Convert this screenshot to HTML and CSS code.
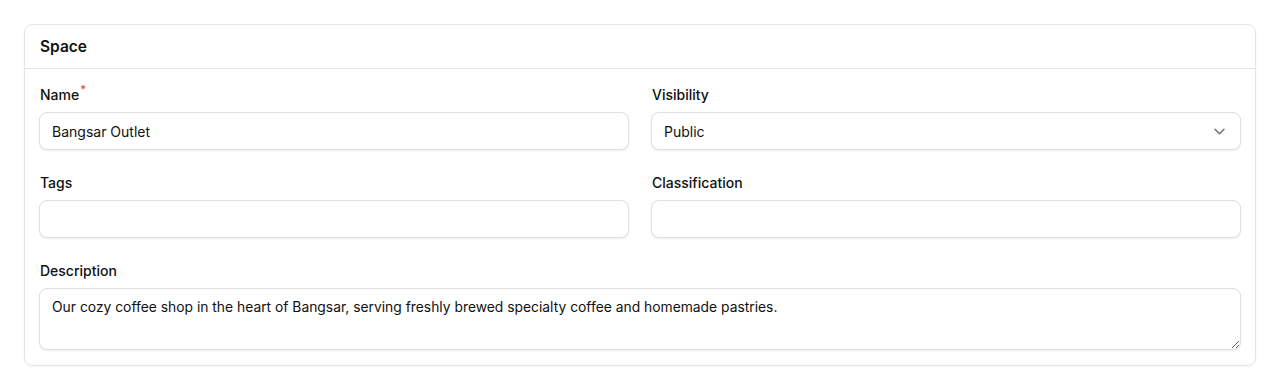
FILE: index.html
```html
<!DOCTYPE html>
<html lang="en">
<head>
    <meta charset="UTF-8">
    <title>Space</title>
    <link rel="stylesheet" href="styles.css">
</head>
<body>
<div class="page">
    <div class="card">
        <div class="cardHeader">Space</div>
        <div class="cardBody">
            <div class="field">
                <label class="label">Name<span class="req">*</span></label>
                <input class="input" type="text" value="Bangsar Outlet">
            </div>
            <div class="field">
                <label class="label">Visibility</label>
                <div class="select">
                    <span>Public</span>
                    <svg width="11" height="7" viewBox="0 0 11 7" fill="none" stroke="#6b7280" stroke-width="1.5" stroke-linecap="round" stroke-linejoin="round"><path d="M1 1.2l4.5 4.5 4.5-4.5"/></svg>
                </div>
            </div>
            <div class="field">
                <label class="label">Tags</label>
                <input class="input" type="text" value="">
            </div>
            <div class="field">
                <label class="label">Classification</label>
                <input class="input" type="text" value="">
            </div>
            <div class="field wide">
                <label class="label">Description</label>
                <textarea class="textarea">Our cozy coffee shop in the heart of Bangsar, serving freshly brewed specialty coffee and homemade pastries.</textarea>
            </div>
        </div>
    </div>
</div>
</body>
</html>
```

FILE: styles.css
```css
*{
    margin: 0px;
    padding: 0px;
    box-sizing: border-box;
}
body{
    background-color: #ffffff;
    font-family: Inter, "Noto Sans", sans-serif;
    color: #111111;
}
.page{
    padding: 24px;
}
.card{
    border: 1px solid #e5e5e5;
    border-radius: 8px;
    box-shadow: 0px 1px 2px rgba(0,0,0,0.05);
}
.cardHeader{
    height: 44px;
    padding: 0px 15px;
    line-height: 43px;
    font-size: 15.5px;
    font-weight: 600;
    border-bottom: 1px solid #e5e5e5;
}
.cardBody{
    display: grid;
    grid-template-columns: 1fr 1fr;
    column-gap: 22px;
    row-gap: 23px;
    padding: 16px 14px 15px;
}
.field{
    display: flex;
    flex-direction: column;
    gap: 7px;
}
.wide{
    grid-column: 1 / 3;
}
.label{
    font-size: 14px;
    font-weight: 500;
    line-height: 20px;
    padding-left: 1px;
}
.req{
    color: #f0384a;
    font-size: 11px;
    vertical-align: top;
    line-height: 8px;
    margin-left: 1px;
}
.input, .select, .textarea{
    width: 100%;
    height: 38px;
    border: 1px solid #e0e0e0;
    border-radius: 8px;
    background-color: #ffffff;
    box-shadow: 0px 1px 2px rgba(0,0,0,0.08);
    font-family: Inter, "Noto Sans", sans-serif;
    font-size: 14px;
    color: #111111;
    padding: 0px 12px;
    outline: none;
}
.select{
    display: flex;
    align-items: center;
    justify-content: space-between;
    padding: 0px 15px 0px 12px;
}
.textarea{
    height: 62px;
    padding: 8px 12px;
    font-size: 13.85px;
    line-height: 20px;
    resize: vertical;
}
```
